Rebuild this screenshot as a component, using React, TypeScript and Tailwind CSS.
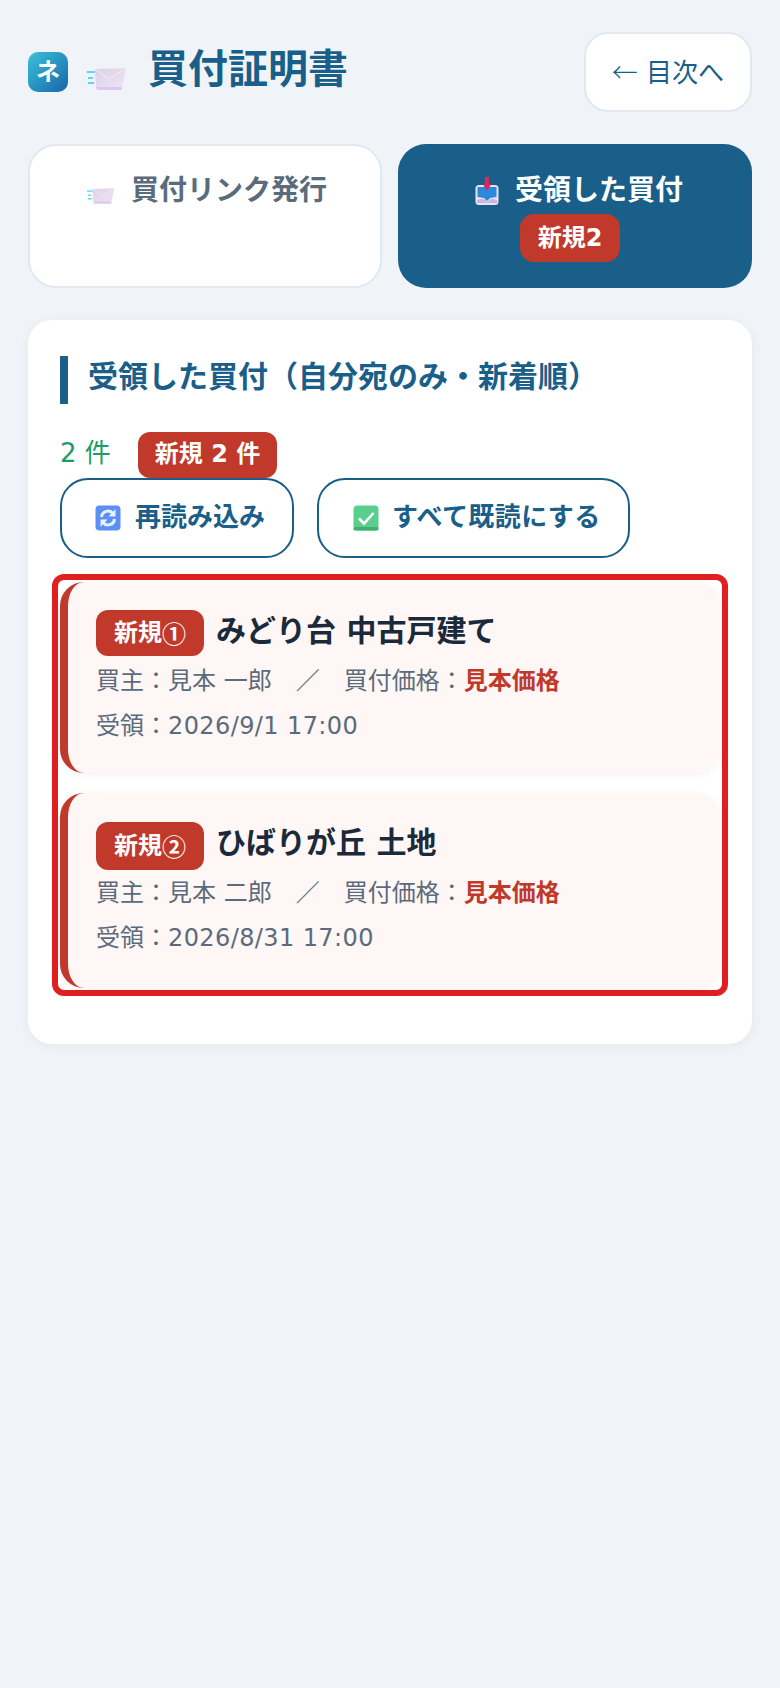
import React from "react";

const cjkOnly = "font-['Noto_Sans_CJK_JP',sans-serif]";

function Mail({ className, id }: { className: string; id: string }) {
  return (
    <svg viewBox="0 0 40 24" className={className}>
      <defs>
        <linearGradient id={id} x1="0" y1="0" x2="1" y2="1">
          <stop offset="0" stopColor="#dcd1e0" />
          <stop offset="1" stopColor="#f0e3fa" />
        </linearGradient>
      </defs>
      <path d="M8 2 L39 1 L35 21 L9 21 Z" fill={`url(#${id})`} />
      <path d="M8 2 L22 12 L39 1" fill="none" stroke="#f3ecf8" strokeWidth="1" />
      <path d="M9 20 L35 20 L34.5 23 L10 23 Z" fill="#dac8f0" />
      <rect x="0" y="4" width="8" height="2" fill="#5cd4fa" />
      <rect x="1" y="10" width="5" height="2" fill="#5cd4fa" />
      <rect x="1" y="15" width="6" height="2" fill="#5cd4fa" />
    </svg>
  );
}

function Inbox() {
  return (
    <svg viewBox="0 0 24 29" className="w-[24px] h-[29px]">
      <rect x="0.5" y="8" width="23" height="20" rx="3.5" fill="#ebe4f0" />
      <path d="M2.5 10 H21.5 V20 L15 21 L12 24 L9 21 L2.5 20 Z" fill="#2f86dd" />
      <path d="M2 23 L8 21.5 L12 25 L16 21.5 L22 23 V26 H2 Z" fill="#c9b6e0" />
      <rect x="10" y="0" width="4" height="9" fill="#e0245e" />
      <path d="M7.5 7 H16.5 L12 13.5 Z" fill="#e0245e" />
    </svg>
  );
}

function Refresh() {
  return (
    <svg viewBox="0 0 26 26" className="w-[26px] h-[26px]">
      <rect x="0.5" y="0.5" width="25" height="25" rx="4" fill="#5b8ff5" />
      <g fill="none" stroke="#e8f1ff" strokeWidth="3">
        <path d="M6.5 12 A6.5 6.5 0 0 1 18 8.5" />
        <path d="M19.5 14 A6.5 6.5 0 0 1 8 17.5" />
      </g>
      <path d="M20.5 4 V11.5 H13.5 Z" fill="#e8f1ff" />
      <path d="M5.5 22 V14.5 H12.5 Z" fill="#e8f1ff" />
    </svg>
  );
}

function Check() {
  return (
    <svg viewBox="0 0 26 26" className="w-[26px] h-[26px]">
      <rect x="0.5" y="0.5" width="25" height="25" rx="4" fill="#58cf8c" />
      <rect x="0.5" y="22" width="25" height="3.5" rx="1.5" fill="#3fae6e" />
      <path d="M6 13.5 L11 18.5 L20.5 8" fill="none" stroke="#fff" strokeWidth="2.6" />
    </svg>
  );
}

function Item({ no, title, buyer, date, tall }: { no: string; title: string; buyer: string; date: string; tall?: boolean }) {
  return (
    <div className={`rounded-[24px] border-l-[8px] border-[#c0392b] bg-[#fff6f6] pl-[28px] pr-[24px] shadow-[0_2px_8px_rgba(0,0,0,0.05)] ${tall ? "pt-[29px] pb-[27px]" : "pt-[28px] pb-[24px]"}`}>
      <div className="flex items-center gap-[12px]">
        <span className={`flex items-center rounded-[12px] bg-[#c0392b] px-[18px] text-[24px] font-bold text-white ${tall ? "h-[48px]" : "h-[46px]"}`}>
          新規<span className={cjkOnly}>{no}</span>
        </span>
        <span className={`h-[46px] text-[30px] font-bold text-[#1a2a3a] ${tall ? "leading-[40px]" : "leading-[42px]"}`}>{title}</span>
      </div>
      <p className={`text-[24px] leading-[45px] text-[#5a6b7c] ${tall ? "mt-[1px]" : "mt-[3px]"}`}>
        買主：見本 {buyer}　／　買付価格：<b className="font-bold text-[#c0392b]">見本価格</b>
      </p>
      <p className="text-[24px] leading-[45px] text-[#5a6b7c]">受領：<span className="tracking-[0.4px]">{date}</span></p>
    </div>
  );
}

export default function App() {
  return (
    <div className="min-h-[1688px] bg-[#f0f4f8] px-[28px] pt-[32px] font-['DejaVu_Sans','Noto_Sans_CJK_JP',sans-serif]">
      <header className="flex items-center justify-between">
        <h1 className="flex items-center text-[40px] leading-[52px] font-bold text-[#1a5f8a]">
          <span className="mr-[19px] flex h-[40px] w-[40px] items-center justify-center rounded-[10px] bg-gradient-to-br from-[#3cc2d8] to-[#1a66a8] text-[24px] leading-none font-bold text-white">ネ</span>
          <Mail id="mail-a" className="mr-[21px] mt-[14px] h-[24px] w-[40px]" />
          <span className="mb-[6px]">買付証明書</span>
        </h1>
        <button className="h-[80px] rounded-[24px] border-2 border-[#e2e8f0] bg-white px-[26px] text-[26px] text-[#1a5f8a]"><span className={`${cjkOnly} font-light`}>←</span> 目次へ</button>
      </header>

      <nav className="mt-[32px] grid grid-cols-2 gap-[16px]">
        <button className="flex h-[144px] items-start justify-center rounded-[28px] border-2 border-[#e2e8f0] bg-white pt-[24px] pl-[4px] text-[28px] font-bold text-[#5a6b7c]">
          <span className="flex items-center gap-[16px]"><Mail id="mail-b" className="mt-[10px] h-[20px] w-[28px]" />買付リンク発行</span>
        </button>
        <button className="flex h-[144px] flex-col items-center rounded-[28px] bg-[#1a5f8a] pt-[26px] pl-[8px] text-[28px] font-bold text-white">
          <span className="flex items-center gap-[16px]"><Inbox />受領した買付</span>
          <span className="mt-[2px] mr-[18px] flex h-[48px] items-center rounded-[14px] bg-[#c0392b] px-[18px] text-[24px]">新規2</span>
        </button>
      </nav>

      <main className="mt-[32px] h-[724px] rounded-[24px] bg-white px-[32px] pt-[36px] shadow-[0_2px_12px_rgba(0,0,0,0.05)]">
        <h2 className="h-[48px] border-l-[8px] border-[#1a5f8a] pl-[20px] text-[30px] leading-[42px] font-bold text-[#1a5f8a]">受領した買付（自分宛のみ・新着順）</h2>
        <div className="mt-[28px] flex h-[46px] items-center">
          <span className="mb-[4px] text-[26px] text-[#1a9e68]">2 件</span>
          <span className="ml-[27px] flex h-[46px] items-center rounded-[12px] bg-[#c0392b] px-[17px] pb-[2px] text-[24px] font-bold text-white">新規 2 件</span>
        </div>
        <div className="flex gap-[23px]">
          <button className="flex h-[80px] items-center gap-[14px] rounded-[28px] border-2 border-[#1a5f8a] bg-white pl-[33px] pr-[27px] text-[26px] font-bold text-[#1a5f8a]"><Refresh /><span className="mb-[2px]">再読み込み</span></button>
          <button className="flex h-[80px] items-center gap-[13px] rounded-[28px] border-2 border-[#1a5f8a] bg-white pl-[34px] pr-[27px] text-[26px] font-bold text-[#1a5f8a]"><Check /><span className="mb-[2px] tracking-[0.4px]">すべて既読にする</span></button>
        </div>
        <div className="mx-[-8px] mt-[16px] flex flex-col gap-[20px] rounded-[12px] border-[6px] border-[#e02020] p-[2px]">
          <Item no="①" title="みどり台 中古戸建て" buyer="一郎" date="2026/9/1 17:00" />
          <Item no="②" title="ひばりが丘 土地" buyer="二郎" date="2026/8/31 17:00" tall />
        </div>
      </main>
    </div>
  );
}
